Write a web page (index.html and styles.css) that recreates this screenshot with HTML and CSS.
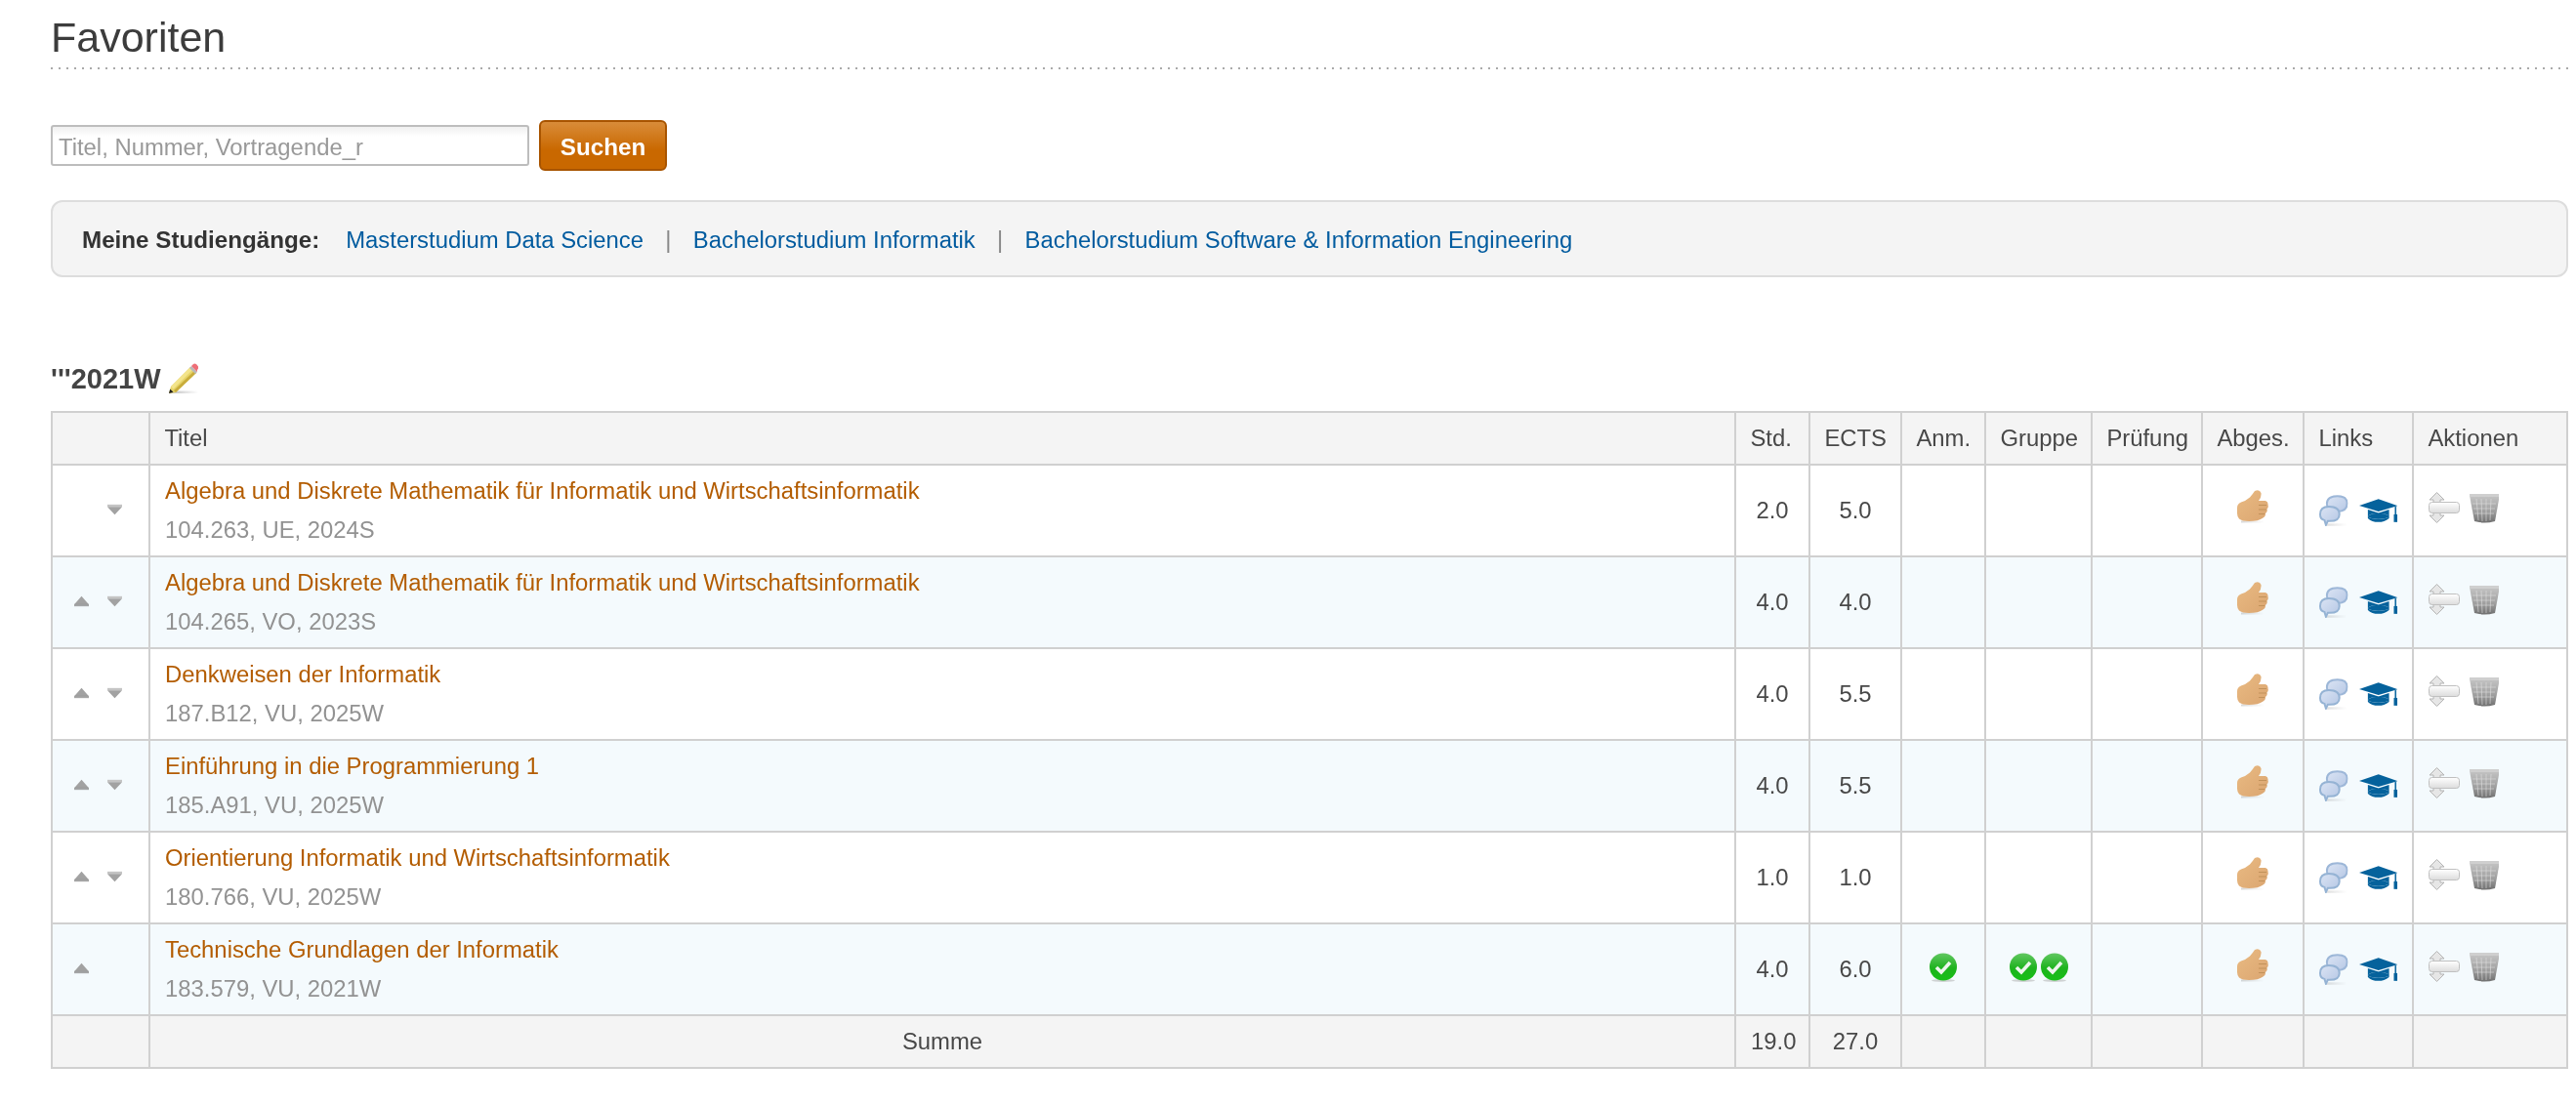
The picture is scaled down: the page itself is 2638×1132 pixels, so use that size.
FILE: index.html
```html
<!DOCTYPE html>
<html lang="de">
<head>
<meta charset="utf-8">
<title>Favoriten</title>
<link rel="stylesheet" href="styles.css">
</head>
<body>
<svg class="defs" width="0" height="0" aria-hidden="true">
  <defs>
    <linearGradient id="gThumb" x1="0" y1="0" x2="1" y2="1"><stop offset="0" stop-color="#e9ba82"/><stop offset="1" stop-color="#dba671"/></linearGradient>
    <linearGradient id="gCheck" x1="0" y1="0" x2="0" y2="1"><stop offset="0" stop-color="#62c762"/><stop offset=".55" stop-color="#1eb31e"/><stop offset="1" stop-color="#17c017"/></linearGradient>
    <linearGradient id="gBubble" x1="0" y1="0" x2="1" y2="1"><stop offset="0" stop-color="#dbe4f4"/><stop offset="1" stop-color="#b4c6e4"/></linearGradient>
    <linearGradient id="gTrash" x1="0" y1="0" x2="0" y2="1"><stop offset="0" stop-color="#c8c8c8"/><stop offset=".6" stop-color="#a0a0a0"/><stop offset="1" stop-color="#707070"/></linearGradient>
    <linearGradient id="gBar" x1="0" y1="0" x2="0" y2="1"><stop offset="0" stop-color="#fff"/><stop offset="1" stop-color="#dcdcdc"/></linearGradient>
    <linearGradient id="gShadow" x1="0" y1="0" x2="1" y2="0"><stop offset="0" stop-color="#888" stop-opacity=".55"/><stop offset="1" stop-color="#888" stop-opacity="0"/></linearGradient>
    <symbol id="i-pencil" viewBox="0 0 32 32">
      <rect x="2" y="28.5" width="29" height="2.5" fill="url(#gShadow)"/>
      <path d="M1 31 L3 24 L23 4 L29 10 L8 30 Z" fill="#e6d46a"/>
      <path d="M3 24 L23 4 L25.5 6.5 L5.5 26.5 Z" fill="#f3e48b"/>
      <path d="M8 30 L29 10 L27 8 L6 28 Z" fill="#c9ad3c"/>
      <path d="M22 5 L24 3 L30 9 L28 11 Z" fill="#b9b9b9"/>
      <path d="M24 3 L26 1 Q27.5 0 29.5 1.5 L31 3.5 Q31.5 5.5 30 7 L30 9 Z" fill="#ee6f78"/>
      <path d="M1 31 L2.2 26.5 L5.5 29.8 Z" fill="#222"/>
    </symbol>
    <symbol id="i-up" viewBox="0 0 16 12">
      <path d="M8 .5 L16 9.5 L0 9.5 Z" fill="#a2a2a2"/><rect x="0" y="9" width="16" height="2.5" fill="#8a8a8a" opacity=".75"/>
    </symbol>
    <symbol id="i-down" viewBox="0 0 16 12">
      <rect x="0" y=".5" width="16" height="2.5" fill="#c4c4c4"/><path d="M0 3 L16 3 L8 11.5 Z" fill="#a2a2a2"/>
    </symbol>
    <symbol id="i-thumb" viewBox="0 0 32 34">
      <rect x="4" y="31.5" width="24" height="2" fill="url(#gShadow)" opacity=".6"/>
      <path d="M0 18 Q0 14 4 12.5 Q9 11 13 7.5 Q16 4 18 1 Q23 -1 24.5 3 Q25 7 22 11 L29 11 Q32 12 31.5 15 Q32.5 18 30.5 19.5 Q31.5 22 29 24 Q29.5 27 26.5 28.5 Q22 32 12 32 Q5 32 2 29.5 Q0 27 0 24 Z" fill="url(#gThumb)"/>
      <path d="M22 15.5 L30 15.5 M22 20 L30 20 M22 24.5 L28 24.5" stroke="#c2925a" stroke-width="1.1" fill="none"/>
    </symbol>
    <symbol id="i-bubble" viewBox="0 0 30 32">
      <rect x="7" y="29.5" width="22" height="2.5" fill="url(#gShadow)" opacity=".5"/>
      <path d="M8 9 Q8 1 19 1 Q29 1 29 8.5 Q29 17 19 17 L17 20 L15 17 Q8 16 8 9 Z" fill="url(#gBubble)" stroke="#9db7d8" stroke-width="2"/>
      <path d="M1 20 Q1 12 10 12 Q21 12 21 20 Q21 27 11 27 L9 27 L7 31 L5.5 26 Q1 25 1 20 Z" fill="url(#gBubble)" stroke="#95b3d4" stroke-width="2"/>
    </symbol>
    <symbol id="i-cap" viewBox="0 0 40 24">
      <path d="M20 0 L40 7 L20 13 L0 7 Z" fill="#05629c"/>
      <path d="M9 11 L20 14.5 L31 11 L31 20 Q26 24 20 24 Q13 24 9 20 Z" fill="#05629c"/>
      <ellipse cx="20" cy="18" rx="10.5" ry="3" fill="#d7e7f2"/>
      <path d="M9.5 17 Q20 12.5 30.5 17 L30.5 19 Q20 23 9.5 19 Z" fill="#05629c"/>
      <rect x="37" y="8" width="1.5" height="9" fill="#05629c"/>
      <rect x="36" y="16" width="4" height="8" fill="#05629c"/>
    </symbol>
    <symbol id="i-move" viewBox="0 0 32 32">
      <path d="M8.5 .5 L16 8 L12 8 L12 11 L5 11 L5 8 L1 8 Z" fill="#e6e6e6" stroke="#b4b4b4"/>
      <path d="M5 21 L12 21 L12 24 L16 24 L8.5 31.5 L1 24 L5 24 Z" fill="#e6e6e6" stroke="#b4b4b4"/>
      <rect x=".5" y="10.5" width="31" height="11" rx="3" fill="url(#gBar)" stroke="#c0c0c0"/>
    </symbol>
    <symbol id="i-trash" viewBox="0 0 30 31">
      <path d="M0 2 L30 1 L30 7 L26 29 Q15 32 5 29 L1 8 Z" fill="url(#gTrash)"/>
      <rect x="0" y="1" width="30" height="3" fill="#cfcfcf"/>
      <path d="M7 6 L9 28 M12 6 L13 29 M17 6 L17 29 M22 6 L21 28 M3 11 L27 11 M4 16 L26 16 M5 21 L25 21" stroke="#e4e4e4" stroke-width="1" opacity=".55" fill="none"/>
    </symbol>
    <symbol id="i-check" viewBox="0 0 30 30">
      <ellipse cx="15" cy="28.5" rx="12" ry="1.5" fill="#aaa" opacity=".5"/>
      <circle cx="15" cy="14.5" r="14" fill="url(#gCheck)"/>
      <path d="M8 15 L13 20 L22 10" stroke="#eef5ee" stroke-width="3.6" fill="none"/>
    </symbol>
  </defs>
</svg>

<main class="page">
  <h1 class="title">Favoriten</h1>

  <form class="search">
    <input class="search-input" type="text" placeholder="Titel, Nummer, Vortragende_r">
    <button class="search-button" type="button">Suchen</button>
  </form>

  <nav class="programs">
    <strong class="programs-label">Meine Studiengänge:</strong>
    <a class="link" href="#">Masterstudium Data Science</a>
    <span class="sep">|</span>
    <a class="link" href="#">Bachelorstudium Informatik</a>
    <span class="sep">|</span>
    <a class="link" href="#">Bachelorstudium Software &amp; Information Engineering</a>
  </nav>

  <h3 class="semester">'''2021W <svg class="i-pencil"><use href="#i-pencil"/></svg></h3>

  <table class="courses">
    <colgroup>
      <col class="c-order"><col class="c-title"><col class="c-std"><col class="c-ects"><col class="c-anm"><col class="c-gruppe"><col class="c-pruef"><col class="c-abg"><col class="c-links"><col class="c-akt">
    </colgroup>
    <thead>
      <tr><th></th><th>Titel</th><th>Std.</th><th>ECTS</th><th>Anm.</th><th>Gruppe</th><th>Prüfung</th><th>Abges.</th><th>Links</th><th>Aktionen</th></tr>
    </thead>
    <tbody>
      <tr>
        <td><div class="order"><span class="slot"></span><svg class="i-arrow"><use href="#i-down"/></svg></div></td>
        <td class="name"><a class="course" href="#">Algebra und Diskrete Mathematik für Informatik und Wirtschaftsinformatik</a><div class="code">104.263, UE, 2024S</div></td>
        <td class="num">2.0</td><td class="num">5.0</td><td></td><td></td><td></td>
        <td class="ctr"><svg class="i-thumb"><use href="#i-thumb"/></svg></td>
        <td><div class="icons"><svg class="i-bubble"><use href="#i-bubble"/></svg><svg class="i-cap"><use href="#i-cap"/></svg></div></td>
        <td><div class="icons actions"><svg class="i-move"><use href="#i-move"/></svg><svg class="i-trash"><use href="#i-trash"/></svg></div></td>
      </tr>
      <tr>
        <td><div class="order"><svg class="i-arrow"><use href="#i-up"/></svg><svg class="i-arrow"><use href="#i-down"/></svg></div></td>
        <td class="name"><a class="course" href="#">Algebra und Diskrete Mathematik für Informatik und Wirtschaftsinformatik</a><div class="code">104.265, VO, 2023S</div></td>
        <td class="num">4.0</td><td class="num">4.0</td><td></td><td></td><td></td>
        <td class="ctr"><svg class="i-thumb"><use href="#i-thumb"/></svg></td>
        <td><div class="icons"><svg class="i-bubble"><use href="#i-bubble"/></svg><svg class="i-cap"><use href="#i-cap"/></svg></div></td>
        <td><div class="icons actions"><svg class="i-move"><use href="#i-move"/></svg><svg class="i-trash"><use href="#i-trash"/></svg></div></td>
      </tr>
      <tr>
        <td><div class="order"><svg class="i-arrow"><use href="#i-up"/></svg><svg class="i-arrow"><use href="#i-down"/></svg></div></td>
        <td class="name"><a class="course" href="#">Denkweisen der Informatik</a><div class="code">187.B12, VU, 2025W</div></td>
        <td class="num">4.0</td><td class="num">5.5</td><td></td><td></td><td></td>
        <td class="ctr"><svg class="i-thumb"><use href="#i-thumb"/></svg></td>
        <td><div class="icons"><svg class="i-bubble"><use href="#i-bubble"/></svg><svg class="i-cap"><use href="#i-cap"/></svg></div></td>
        <td><div class="icons actions"><svg class="i-move"><use href="#i-move"/></svg><svg class="i-trash"><use href="#i-trash"/></svg></div></td>
      </tr>
      <tr>
        <td><div class="order"><svg class="i-arrow"><use href="#i-up"/></svg><svg class="i-arrow"><use href="#i-down"/></svg></div></td>
        <td class="name"><a class="course" href="#">Einführung in die Programmierung 1</a><div class="code">185.A91, VU, 2025W</div></td>
        <td class="num">4.0</td><td class="num">5.5</td><td></td><td></td><td></td>
        <td class="ctr"><svg class="i-thumb"><use href="#i-thumb"/></svg></td>
        <td><div class="icons"><svg class="i-bubble"><use href="#i-bubble"/></svg><svg class="i-cap"><use href="#i-cap"/></svg></div></td>
        <td><div class="icons actions"><svg class="i-move"><use href="#i-move"/></svg><svg class="i-trash"><use href="#i-trash"/></svg></div></td>
      </tr>
      <tr>
        <td><div class="order"><svg class="i-arrow"><use href="#i-up"/></svg><svg class="i-arrow"><use href="#i-down"/></svg></div></td>
        <td class="name"><a class="course" href="#">Orientierung Informatik und Wirtschaftsinformatik</a><div class="code">180.766, VU, 2025W</div></td>
        <td class="num">1.0</td><td class="num">1.0</td><td></td><td></td><td></td>
        <td class="ctr"><svg class="i-thumb"><use href="#i-thumb"/></svg></td>
        <td><div class="icons"><svg class="i-bubble"><use href="#i-bubble"/></svg><svg class="i-cap"><use href="#i-cap"/></svg></div></td>
        <td><div class="icons actions"><svg class="i-move"><use href="#i-move"/></svg><svg class="i-trash"><use href="#i-trash"/></svg></div></td>
      </tr>
      <tr>
        <td><div class="order"><svg class="i-arrow"><use href="#i-up"/></svg><span class="slot"></span></div></td>
        <td class="name"><a class="course" href="#">Technische Grundlagen der Informatik</a><div class="code">183.579, VU, 2021W</div></td>
        <td class="num">4.0</td><td class="num">6.0</td>
        <td class="ctr"><svg class="i-check"><use href="#i-check"/></svg></td>
        <td class="ctr"><div class="checks"><svg class="i-check"><use href="#i-check"/></svg><svg class="i-check"><use href="#i-check"/></svg></div></td>
        <td></td>
        <td class="ctr"><svg class="i-thumb"><use href="#i-thumb"/></svg></td>
        <td><div class="icons"><svg class="i-bubble"><use href="#i-bubble"/></svg><svg class="i-cap"><use href="#i-cap"/></svg></div></td>
        <td><div class="icons actions"><svg class="i-move"><use href="#i-move"/></svg><svg class="i-trash"><use href="#i-trash"/></svg></div></td>
      </tr>
    </tbody>
    <tfoot>
      <tr><td></td><td class="sum-label">Summe</td><td class="num">19.0</td><td class="num">27.0</td><td></td><td></td><td></td><td></td><td></td><td></td></tr>
    </tfoot>
  </table>
</main>
</body>
</html>
```

FILE: styles.css
```css
* { box-sizing: border-box; }
html, body { margin: 0; background: #fff; }
body {
  font-family: "Liberation Sans", Arial, sans-serif;
  font-size: 23.85px;
  color: #484848;
}
.defs { display: block; height: 0; width: 0; overflow: hidden; }

.page { padding: 0 8px 38px 52px; filter: blur(.35px); }

.title {
  margin: 0;
  height: 71px;
  padding-top: 9px;
  font-size: 43px;
  line-height: 58px;
  font-weight: 400;
  color: #3c3c3c;
  background: repeating-linear-gradient(90deg, #aaa 0 2px, transparent 2px 8px) left bottom / 100% 2px no-repeat;
}

.search {
  display: flex;
  align-items: center;
  gap: 10px;
  margin-top: 52px;
}
.search-input {
  width: 490px;
  height: 42px;
  padding: 4px 6px 0;
  border: 2px solid #bdbdbd;
  border-radius: 3px;
  background: linear-gradient(#f0f0f0, #fff 10px);
  font: 23.85px "Liberation Sans", Arial, sans-serif;
  color: #444;
}
.search-input::placeholder { color: #999; opacity: 1; }
.search-button {
  width: 131px;
  height: 52px;
  padding: 3px 0 0;
  border: 2px solid #a85400;
  border-radius: 6px;
  background: linear-gradient(#d98c39, #c96800 60%);
  font: bold 24.2px "Liberation Sans", Arial, sans-serif;
  color: #fff;
}

.programs {
  display: flex;
  align-items: center;
  height: 79px;
  margin-top: 30px;
  padding: 2px 0 0 30px;
  border: 2px solid #ddd;
  border-radius: 12px;
  background: #f4f4f4;
}
.programs-label { color: #333; font-size: 24.2px; margin-right: 27px; }
.link { color: #005b9f; text-decoration: none; }
.sep { margin: 0 22.3px; color: #888; }

.semester {
  display: flex;
  align-items: center;
  gap: 7px;
  height: 36px;
  margin: 86px 0 0;
  font-size: 29px;
  line-height: 36px;
  font-weight: 700;
  color: #444;
}
.i-pencil { width: 32px; height: 32px; }

.courses {
  width: 2577px;
  margin: 15px 0 0;
  border-collapse: collapse;
  table-layout: fixed;
}
.c-order { width: 100px; }
.c-title { width: 1624px; }
.c-std { width: 76px; }
.c-ects { width: 94px; }
.c-anm { width: 86px; }
.c-gruppe { width: 109px; }
.c-pruef { width: 113px; }
.c-abg { width: 104px; }
.c-links { width: 112px; }
.c-akt { width: 158px; }

.courses th, .courses td { border: 2px solid #d0d0d0; padding: 0 15px; }
.courses th {
  height: 54px;
  padding-left: 14.4px;
  background: #f4f4f4;
  text-align: left;
  font-weight: 400;
  white-space: nowrap;
}
.courses tbody td { height: 94px; }
.courses tbody tr:nth-child(even) td { background: #f4fafd; }
.courses tfoot td { height: 54px; background: #f4f4f4; }

.num { text-align: center; }
.ctr { text-align: center; }
.sum-label { text-align: center; }

.course { display: block; color: #b35c00; text-decoration: none; line-height: 40px; }
.code { color: #929292; line-height: 40px; }

.order { display: flex; justify-content: center; gap: 19px; margin: -2px 5px 0 0; }
.slot { width: 15px; height: 12px; }
.i-arrow { width: 15px; height: 12px; }

.icons { display: flex; align-items: center; gap: 11px; }
.actions { gap: 10px; margin-top: -6px; }
.checks { display: flex; justify-content: center; gap: 2px; }
.i-thumb { display: block; width: 32px; height: 34px; margin: -8px auto 0; }
.i-bubble { width: 30px; height: 32px; }
.i-cap { width: 40px; height: 24px; }
.i-move { width: 32px; height: 32px; }
.i-trash { width: 30px; height: 31px; }
.i-check { display: block; width: 30px; height: 30px; margin: -4px auto 0; }
.checks .i-check { margin: -4px 0 0; }
```
